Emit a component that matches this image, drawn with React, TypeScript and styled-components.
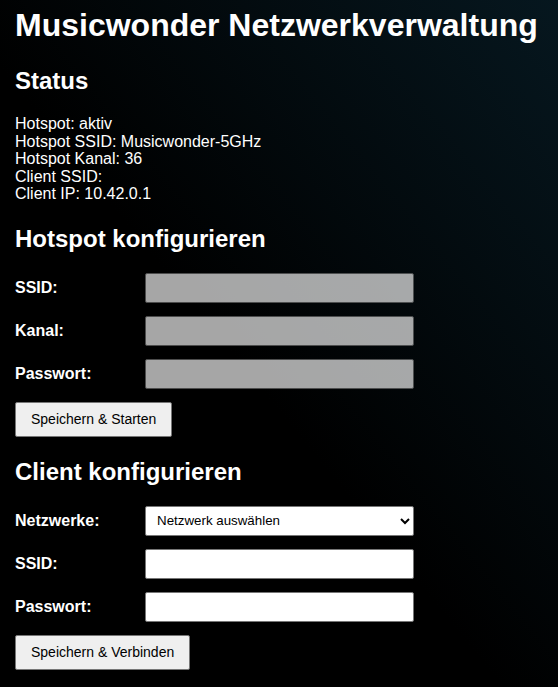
import React from "react";
import styled, { createGlobalStyle } from "styled-components";

const Global = createGlobalStyle`
  html, body {
    margin: 0;
    padding: 0;
  }
  body {
    min-height: 100vh;
    background: linear-gradient(to top right, #000000 0%, #000000 45%, #06171f 100%);
    background-attachment: fixed;
    color: #ffffff;
    font-family: "Liberation Sans", Arial, sans-serif;
  }
`;

const Page = styled.div`
  padding: 7px 15px 16px;
  min-height: 687px;
  box-sizing: border-box;
`;

const Title = styled.h1`
  font-size: 32px;
  font-weight: bold;
  line-height: normal;
  margin: 0 0 23px;
`;

const SectionTitle = styled.h2`
  font-size: 24px;
  font-weight: bold;
  line-height: normal;
  margin: 0 0 20px;
`;

const StatusBlock = styled.div`
  font-size: 16px;
  line-height: 17.6px;
  margin: 0 0 22px;
`;

const Form = styled.form`
  display: flex;
  flex-direction: column;
  gap: 13px;
  margin: 1px 0 21px;
`;

const Row = styled.div`
  display: flex;
  align-items: center;
  height: 30px;
`;

const Label = styled.label`
  width: 130px;
  flex: none;
  font-size: 16px;
  font-weight: bold;
`;

const TextInput = styled.input<{ $dim?: boolean }>`
  box-sizing: border-box;
  width: 269px;
  height: 30px;
  margin: 0;
  padding: 0 8px;
  border: 1px solid #767676;
  border-radius: 2px;
  background: #ffffff;
  font-family: "Liberation Sans", Arial, sans-serif;
  font-size: 13.33px;
  color: #000;
  opacity: ${(p) => (p.$dim ? 0.65 : 1)};
  outline: none;
`;

const Select = styled.select`
  box-sizing: border-box;
  width: 269px;
  height: 30px;
  margin: 0;
  padding: 0 4px 0 7px;
  border: 1px solid #767676;
  border-radius: 2px;
  background: #ffffff;
  color: #000;
  font-family: "Liberation Sans", Arial, sans-serif;
  font-size: 13.33px;
`;

const Button = styled.button`
  align-self: flex-start;
  box-sizing: border-box;
  height: 35px;
  margin: 0;
  padding: 0 15px;
  border: 1px solid #767676;
  border-radius: 2px;
  background: #efefef;
  color: #000;
  font-family: "Liberation Sans", Arial, sans-serif;
  font-size: 14px;
  line-height: 17px;
  cursor: pointer;
`;

const statusLines = [
  "Hotspot: aktiv",
  "Hotspot SSID: Musicwonder-5GHz",
  "Hotspot Kanal: 36",
  "Client SSID:",
  "Client IP: 10.42.0.1",
];

export default function App() {
  return (
    <>
      <Global />
      <Page>
        <Title>Musicwonder Netzwerkverwaltung</Title>

        <SectionTitle>Status</SectionTitle>
        <StatusBlock>
          {statusLines.map((l) => (
            <div key={l}>{l}</div>
          ))}
        </StatusBlock>

        <SectionTitle>Hotspot konfigurieren</SectionTitle>
        <Form onSubmit={(e) => e.preventDefault()}>
          <Row>
            <Label htmlFor="h-ssid">SSID:</Label>
            <TextInput id="h-ssid" $dim disabled />
          </Row>
          <Row>
            <Label htmlFor="h-kanal">Kanal:</Label>
            <TextInput id="h-kanal" $dim disabled />
          </Row>
          <Row>
            <Label htmlFor="h-pw">Passwort:</Label>
            <TextInput id="h-pw" type="password" $dim disabled />
          </Row>
          <Button type="submit">Speichern &amp; Starten</Button>
        </Form>

        <SectionTitle>Client konfigurieren</SectionTitle>
        <Form onSubmit={(e) => e.preventDefault()}>
          <Row>
            <Label htmlFor="c-net">Netzwerke:</Label>
            <Select id="c-net" defaultValue="">
              <option value="">Netzwerk auswählen</option>
            </Select>
          </Row>
          <Row>
            <Label htmlFor="c-ssid">SSID:</Label>
            <TextInput id="c-ssid" />
          </Row>
          <Row>
            <Label htmlFor="c-pw">Passwort:</Label>
            <TextInput id="c-pw" type="password" />
          </Row>
          <Button type="submit">Speichern &amp; Verbinden</Button>
        </Form>
      </Page>
    </>
  );
}
